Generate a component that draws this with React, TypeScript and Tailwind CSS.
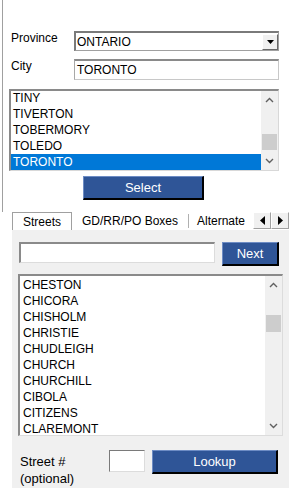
import React from "react";

const cities = ["TINY", "TIVERTON", "TOBERMORY", "TOLEDO", "TORONTO"];
const streets = ["CHESTON", "CHICORA", "CHISHOLM", "CHRISTIE", "CHUDLEIGH", "CHURCH", "CHURCHILL", "CIBOLA", "CITIZENS", "CLAREMONT"];

function Up() {
  return (
    <svg width="9" height="6" viewBox="0 0 9 6"><path d="M1 5 L4.5 1.5 L8 5" stroke="#606060" strokeWidth="1.4" fill="none" /></svg>
  );
}
function Down() {
  return (
    <svg width="9" height="6" viewBox="0 0 9 6"><path d="M1 1 L4.5 4.5 L8 1" stroke="#606060" strokeWidth="1.4" fill="none" /></svg>
  );
}

function Scrollbar({ thumbTop, thumbH }: { thumbTop: number; thumbH: number }) {
  return (
    <div className="relative w-[17px] h-full bg-[#f0f0f0] shrink-0">
      <div className="absolute top-[2px] left-0 w-full h-[14px] flex items-center justify-center"><Up /></div>
      <div className="absolute left-[1px] w-[15px] bg-[#cdcdcd]" style={{ top: thumbTop, height: thumbH }} />
      <div className="absolute bottom-[2px] left-0 w-full h-[14px] flex items-center justify-center"><Down /></div>
    </div>
  );
}

function BlueButton({ label, className }: { label: string; className: string }) {
  return (
    <div className={"flex items-center justify-center bg-[#2f5597] text-white text-[13px] border-t border-l border-[#6d8cc4] border-r-2 border-b-2 border-r-black border-b-black " + className}>
      {label}
    </div>
  );
}

export default function App() {
  return (
    <div className="w-[289px] h-[488px] bg-white text-black overflow-hidden" style={{ fontFamily: '"Liberation Sans", Arial, sans-serif', fontSize: 12 }}>
      <div className="ml-[2px] h-[212px] border-l border-[#a0a0a0] pt-[31px] pl-[5px]">
        <div className="flex items-start h-[20px]">
          <div className="w-[66px] pl-[3px] text-[12px] leading-[14px]">Province</div>
          <div className="w-[205px] h-[20px] flex items-center border-t-2 border-l-2 border-[#7a7a7a] border-r border-b border-r-[#a0a0a0] border-b-[#a0a0a0] bg-white">
            <span className="flex-1 pl-[1px] leading-[14px]">ONTARIO</span>
            <div className="w-[16px] h-[16px] bg-[#f0f0f0] border-r border-b border-[#696969] border-t border-l border-t-white border-l-white flex items-center justify-center">
              <svg width="7" height="4" viewBox="0 0 7 4"><path d="M0 0 H7 L3.5 4 Z" fill="#000" /></svg>
            </div>
          </div>
        </div>
        <div className="flex items-start h-[21px] mt-[8px]">
          <div className="w-[66px] pl-[3px] leading-[14px]">City</div>
          <div className="w-[205px] h-[21px] flex items-center border border-[#c8c8c8] border-t-2 border-t-[#8a8a8a] border-l border-l-[#a8a8a8] bg-white pl-[2px] leading-[14px]">
            TORONTO
          </div>
        </div>
        <div className="mt-[9px] ml-[1px] w-[270px] h-[82px] flex border-t-2 border-l-2 border-[#8a8a8a] border-r border-b border-r-[#d8d8d8] border-b-[#d8d8d8]">
          <div className="flex-1 flex flex-col justify-end bg-white overflow-hidden">
            {cities.map((c) => (
              <div key={c} className={"h-[16px] leading-[16px] pl-[2px] " + (c === "TORONTO" ? "bg-[#0078d7] text-white" : "")}>{c}</div>
            ))}
          </div>
          <Scrollbar thumbTop={43} thumbH={16} />
        </div>
        <div className="mt-[5px] ml-[75px]">
          <BlueButton label="Select" className="w-[121px] h-[24px]" />
        </div>
      </div>
      <div className="ml-[12px]">
        <div className="flex items-stretch h-[18px] text-[12px] bg-white">
          <div className="w-[60px] border border-[#a0a0a0] border-b-0 bg-white flex items-center justify-center leading-[14px]">Streets</div>
          <div className="w-[117px] flex items-center justify-center leading-[14px] border-r border-[#b0b0b0] my-[2px]">GD/RR/PO Boxes</div>
          <div className="flex-1 flex items-center pl-[8px] leading-[14px] overflow-hidden whitespace-nowrap relative">
            Alternate
            <div className="absolute right-[0px] top-0 h-[18px] flex">
              <div className="w-[18px] h-[17px] bg-[#f0f0f0] border border-[#a0a0a0] border-t-white border-l-white flex items-center justify-center">
                <svg width="5" height="9" viewBox="0 0 5 9"><path d="M5 0 V9 L0 4.5 Z" fill="#000" /></svg>
              </div>
              <div className="w-[18px] h-[17px] bg-[#f0f0f0] border border-[#a0a0a0] border-t-white border-l-white flex items-center justify-center">
                <svg width="5" height="9" viewBox="0 0 5 9"><path d="M0 0 V9 L5 4.5 Z" fill="#000" /></svg>
              </div>
            </div>
          </div>
        </div>
        <div className="h-[258px] bg-[#f0f0f0] pt-[12px] pl-[7px]">
          <div className="flex items-start">
            <div className="w-[196px] h-[21px] bg-white border-t-2 border-l-2 border-[#8a8a8a] border-r border-b border-r-[#dcdcdc] border-b-[#dcdcdc]" />
            <BlueButton label="Next" className="ml-[7px] w-[57px] h-[24px]" />
          </div>
          <div className="mt-[8px] -ml-[1px] w-[265px] h-[162px] flex border-t-2 border-l-2 border-[#8a8a8a] border-r border-b border-r-[#dcdcdc] border-b-[#dcdcdc] bg-white">
            <div className="flex-1 flex flex-col pt-[1px] overflow-hidden">
              {streets.map((s) => (
                <div key={s} className="h-[16px] leading-[16px] pl-[3px]">{s}</div>
              ))}
            </div>
            <Scrollbar thumbTop={39} thumbH={17} />
          </div>
          <div className="flex items-start mt-[14px]">
            <div className="w-[90px] pl-[1px] text-[13px] leading-[17px] pt-[3px]">Street #<br />(optional)</div>
            <div className="w-[36px] h-[22px] bg-white border-t border-l border-[#7a7a7a] border-r border-b border-r-[#dcdcdc] border-b-[#dcdcdc]" />
            <BlueButton label="Lookup" className="ml-[7px] w-[126px] h-[24px]" />
          </div>
        </div>
      </div>
    </div>
  );
}
